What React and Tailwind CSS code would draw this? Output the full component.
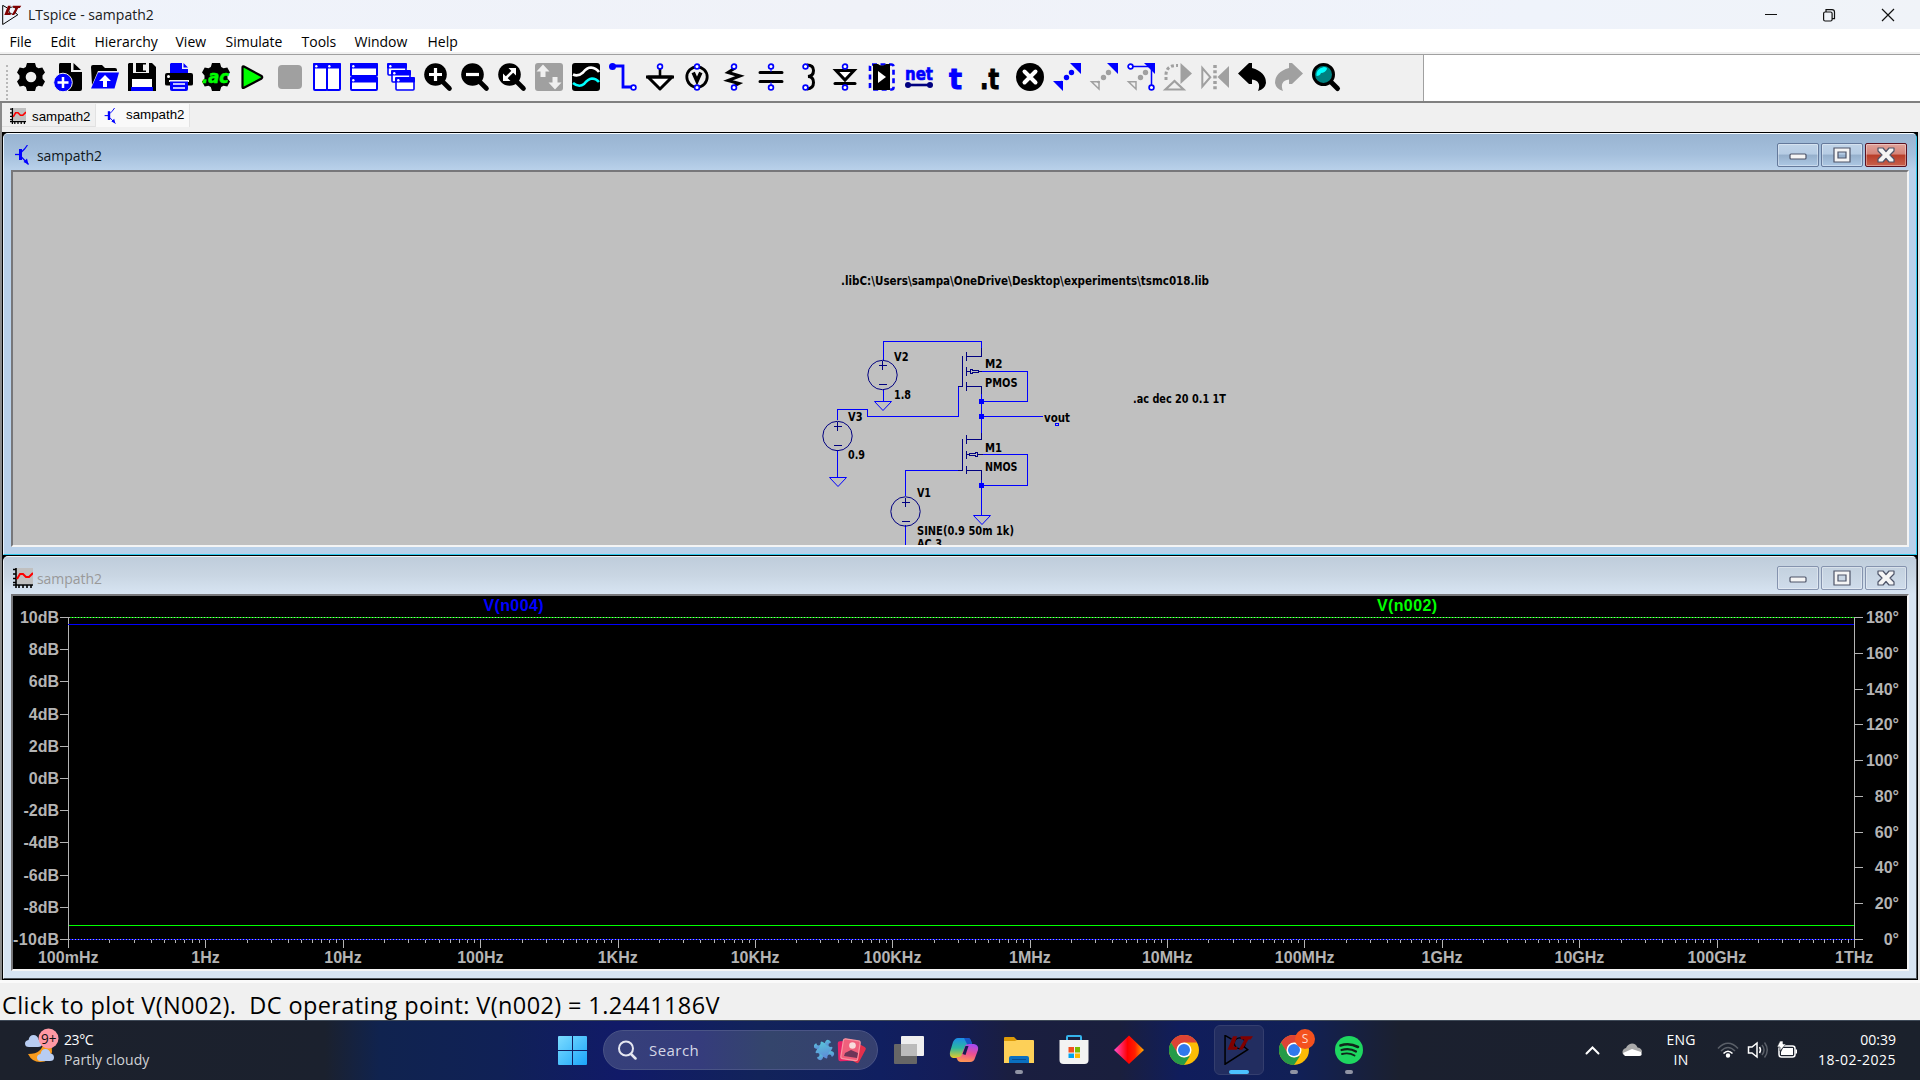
import React from "react";

const BLUE = "#0000ff";
const GRAY = "#a0a0a0";

function Ring({ x, y }) {
  return <circle cx={x} cy={y} r="2.4" fill="#fff" stroke={BLUE} strokeWidth="1.7" />;
}

function Lens({ children }) {
  return (
    <>
      <path d="M17.5 17.5 L25.5 25.5" stroke="#000" strokeWidth="4.6" strokeLinecap="round" />
      <circle cx="11.5" cy="11.5" r="11.3" fill="#000" />
      {children}
    </>
  );
}

const Pane = ({ x, y, w, h, sw = 2 }) => (
  <g>
    <rect x={x + 1} y={y + 1} width={w - 2} height={h - 2} rx="1" fill="#fff" stroke={BLUE} strokeWidth={sw} />
    <rect x={x} y={y} width={w} height="5.5" rx="1" fill={BLUE} />
    <circle cx={x + 3.3} cy={y + 3.2} r="1.2" fill="#fff" />
  </g>
);

const TOOLS = [
  ["settings", <g>
    <path d="M10 0h8l1.2 4 2.3 1.3L25.300 4.500 28 9.500 25.500 12.400v3.200L28 18.500l-2.700 5-3.800-.800L19.200 24 18 28h-8l-1.200-4-2.300-1.300-3.800.8L0 18.500l2.500-2.900v-3.200L0 9.500l2.700-5 3.800.8L8.800 4z" />
    <circle cx="14" cy="14" r="5.300" fill="#f0f0f0" />
  </g>],
  ["new", <g>
    <path d="M6 0h11v9h11v17q0 2-2 2H6q-2 0-1-2V2q0-2 1-2zM19.500 0v7H27z" />
    <circle cx="9" cy="19.500" r="9.300" fill={BLUE} stroke="#f0f0f0" strokeWidth="1" />
    <path d="M9 14v11M3.500 19.500h11" stroke="#fff" strokeWidth="2.500" />
  </g>],
  ["open", <g>
    <path d="M0 4q0-2 2-2h9l3 3h10q2 0 2 2v1H7L1 22z" />
    <path d="M7 9.500h21l-4.500 16H0z" fill={BLUE} />
    <path d="M14 12l6 6h-4v6h-4v-6H8z" fill="#fff" />
  </g>],
  ["save", <g>
    <path d="M1 0h4v10h16V0h3l4 4v24H0V1z" />
    <path d="M8 0h10v9H8z" />
    <path d="M15 1.500h3v6h-3z" fill="#f0f0f0" />
    <path d="M4 16h20v9H4z" fill="#fff" />
    <path d="M3 24h22v4H3z" fill={BLUE} />
  </g>],
  ["print", <g>
    <path d="M6 0h11v6h6v4H5V1z" fill={BLUE} />
    <path d="M18.500 0v4.500H23z" fill={BLUE} />
    <path d="M2 10h24q2 0 2 2v9q0 1.500-2 1.500H2Q0 22.500 0 21v-9q0-2 2-2z" />
    <circle cx="3.500" cy="13.500" r="1.500" fill="#fff" />
    <path d="M4 17h20v2H4z" fill="#f0f0f0" />
    <path d="M5 18.500h18V26q0 2-2 2H7q-2 0-2-2z" fill={BLUE} />
    <path d="M8 21h12M8 25h12" stroke="#fff" strokeWidth="1.500" />
  </g>],
  ["analysis", <g>
    <path d="M10 0h8l1.200 4 2.300 1.300L25.300 4.500 28 9.500 25.500 12.400v3.200L28 18.500l-2.700 5-3.800-.800L19.200 24 18 28h-8l-1.200-4-2.300-1.300-3.800.8L0 18.500l2.500-2.900v-3.200L0 9.500l2.700-5 3.800.8L8.800 4z" />
    <text x="0" y="20" fontFamily="DejaVu Sans" fontWeight="700" fontStyle="italic" fontSize="17" textLength="27" lengthAdjust="spacingAndGlyphs" fill="#00ff00" stroke="#00ff00" strokeWidth=".5">.ac</text>
  </g>],
  ["run", <path d="M3.500 4.500v19.500q0 1.500 1.500.800L22.500 15.500q1.500-1.500 0-2.500L5 3.500Q3.500 3 3.500 4.500z" fill="#00ff00" stroke="#000" strokeWidth="2.200" />],
  ["stop", <rect x="2" y="2" width="24" height="24" rx="4" fill={GRAY} />],
  ["tile-v", <g><Pane x={0} y={0} w={15} h={28} /><Pane x={13} y={0} w={15} h={28} /></g>],
  ["tile-h", <g><Pane x={0} y={0} w={28} h={14} /><Pane x={0} y={14} w={28} h={14} /></g>],
  ["cascade", <g><Pane x={0} y={0} w={20} h={13} sw={1.600} /><Pane x={4} y={7} w={20} h={13} sw={1.600} /><Pane x={8} y={14} w={20} h={14} sw={1.600} /></g>],
  ["zoom-in", <Lens><path d="M11.500 5v13M5 11.500h13" stroke="#fff" strokeWidth="3.200" /></Lens>],
  ["zoom-out", <Lens><path d="M5 11.500h13" stroke="#fff" strokeWidth="3.200" /></Lens>],
  ["zoom-fit", <Lens><path d="M8 15l7-7" stroke="#fff" strokeWidth="2.600" /><path d="M10.500 5H18v7.500zM5 10.500V18h7.500z" fill="#fff" /></Lens>],
  ["pan", <g><rect width="28" height="28" rx="3" fill={GRAY} /><path d="M8 1.500l6.500 7h-4V14h-5V8.500h-4zM20 26.500l-6.500-7h4V14h5v5.500h4z" fill="#f0f0f0" /></g>],
  ["waves", <g>
    <rect width="28" height="28" rx="3" />
    <path d="M1 11.500q5 2.500 10-2 4-5 8-5 5 .5 8 4.500" fill="none" stroke="#fff" strokeWidth="2.600" />
    <path d="M1 20q6 5 11 1 4-5 8-5.500 4 0 7 3.500" fill="none" stroke="#00ffff" strokeWidth="2.600" />
  </g>],
  ["wire", <g><path d="M3 3h11v21h9" fill="none" stroke={BLUE} strokeWidth="2.800" /><circle cx="3.500" cy="3.500" r="3.500" fill={BLUE} /><Ring x={24.500} y={24.500} /></g>],
  ["ground", <g><path d="M14 5v9" stroke="#000" strokeWidth="2.600" /><path d="M2 14h24L14 26z" fill="#fff" stroke="#000" strokeWidth="3" strokeLinejoin="round" /><path d="M0 14h28" stroke="#000" strokeWidth="3" /><Ring x={14} y={3.500} /></g>],
  ["voltage", <g><circle cx="14" cy="14" r="10.200" fill="none" stroke="#000" strokeWidth="2.800" /><path d="M10.200 9.500l3.800 8.500 3.800-8.500" fill="none" stroke="#000" strokeWidth="3.600" /><Ring x={14} y={3.500} /><Ring x={14} y={24.500} /></g>],
  ["resistor", <g><path d="M15 5l-7 4.500 12 3.500-12 4.500 11 3-4 2" fill="none" stroke="#000" strokeWidth="3" /><Ring x={14} y={3.500} /><Ring x={14} y={24.500} /></g>],
  ["capacitor", <g><path d="M3 9.500h22M3 18.500h22" stroke="#000" strokeWidth="3" strokeLinecap="round" /><path d="M14 5v4M14 19v4" stroke={BLUE} /><Ring x={14} y={3.500} /><Ring x={14} y={24.500} /></g>],
  ["inductor", <g><path d="M13 2q6.500 0 6.500 5.500T14 13.500q5.500 0 5.500 6T13 26" fill="none" stroke="#000" strokeWidth="3" /><Ring x={11.500} y={3.500} /><Ring x={11.500} y={24.500} /></g>],
  ["diode", <g><path d="M5 7.500h18l-9 9.500z" fill="#fff" stroke="#000" strokeWidth="3" /><path d="M4 20.500h20" stroke="#000" strokeWidth="3" strokeLinecap="round" /><Ring x={14} y={3.500} /><Ring x={14} y={24.500} /></g>],
  ["component", <g>
    <rect x="2" y="1.500" width="23.500" height="25" rx="2" fill="none" stroke={BLUE} strokeWidth="2.600" strokeDasharray="5 3.500" />
    <path d="M5 2q0-1 1-1h4q4 3 8 0h4v26H5z" /><path d="M10 8v12l8-6z" fill="#fff" />
  </g>],
  ["net", <g><text x="0" y="16.500" fontFamily="DejaVu Sans" fontWeight="700" fontSize="18" textLength="28" lengthAdjust="spacingAndGlyphs" fill={BLUE} stroke={BLUE} strokeWidth=".7">net</text><path d="M3 22h22" stroke="#000080" strokeWidth="2.600" /><circle cx="3" cy="22" r="3" fill="#000080" /><circle cx="25" cy="22" r="3" fill="#000080" /></g>],
  ["text", <text x="7" y="25.500" fontFamily="DejaVu Sans" fontWeight="700" fontSize="29" textLength="13" lengthAdjust="spacingAndGlyphs" fill={BLUE} stroke={BLUE}>t</text>],
  ["directive", <text x="1" y="25.500" fontFamily="DejaVu Sans" fontWeight="700" fontSize="29" textLength="19" lengthAdjust="spacingAndGlyphs" stroke="#000">.t</text>],
  ["delete", <g><circle cx="14" cy="14" r="14" /><path d="M8.500 8.500l11 11M19.500 8.500l-11 11" stroke="#fff" strokeWidth="4" strokeLinecap="round" /></g>],
  ["move", <g fill={BLUE}><path d="M17 0h11v11zM0 18h10v10z" /><circle cx="18.500" cy="9.500" r="2.700" /><circle cx="13.500" cy="14.500" r="2.700" /><circle cx="8.500" cy="19" r="1.300" /></g>],
  ["drag", <g><path d="M17 0h11v11z" fill={BLUE} /><path d="M1.500 18.800h7.500v7.200z" fill="none" stroke={GRAY} strokeWidth="1.500" /><g fill={GRAY}><circle cx="18.500" cy="9.500" r="2.700" /><circle cx="13.500" cy="14.500" r="2.700" /><circle cx="8.500" cy="19" r="1.300" /></g></g>],
  ["drag-wire", <g><path d="M17 0h11v11z" fill={BLUE} /><path d="M5 3.500h19.500V22" fill="none" stroke={BLUE} strokeWidth="1.500" /><path d="M1.500 18.800h7.500v7.200z" fill="none" stroke={GRAY} strokeWidth="1.500" /><g fill={GRAY}><circle cx="18.500" cy="9.500" r="2.700" /><circle cx="13.500" cy="14.500" r="2.700" /></g><Ring x={3.500} y={3.500} /><Ring x={24.500} y={24.500} /></g>],
  ["rotate", <g><path d="M16.500 0L28 10.500 16.500 21z" fill={GRAY} /><path d="M1.500 26.500h18L10.500 18z" fill="none" stroke={GRAY} strokeWidth="2.200" /><path d="M2 17V12Q2 2 14 2.500" fill="none" stroke={GRAY} strokeWidth="3" strokeDasharray="3 2.200" /></g>],
  ["mirror", <g><path d="M1.300 5v18.500l8-9.300z" fill="none" stroke={GRAY} strokeWidth="2" /><path d="M28 3v22l-11.500-11z" fill={GRAY} /><path d="M14 2v25" stroke={GRAY} strokeWidth="3.500" strokeDasharray="3 2.300" /></g>],
  ["undo", <path d="M0 10.500L11 0h3v5q14 4 14 15-1 6-8 8 4-10-6-11.500V21h-3z" />],
  ["redo", <path d="M28 10.500L17 0h-3v5Q0 9 0 20q1 6 8 8-4-10 6-11.500V21h3z" fill={GRAY} />],
  ["find", <g><path d="M18 18l7.500 7.500" stroke="#000" strokeWidth="5" strokeLinecap="round" /><circle cx="11.500" cy="11.500" r="10" fill="#008080" stroke="#000" strokeWidth="3" /><path d="M4.500 13q-1-7 7.500-9 3 0 3 2-2 4-6 4-1 3-4.500 3z" fill="#00ffff" /></g>],
];

const MENUS = [
  ["File", "w-[41px]"], ["Edit", "w-[44px]"], ["Hierarchy", "w-[81px]"], ["View", "w-[50px]"],
  ["Simulate", "w-[76px]"], ["Tools", "w-[53px]"], ["Window", "w-[73px]"], ["Help", "w-[60px]"],
];

function LtLogo({ size }) {
  return (
    <svg width={size} height={size} viewBox="0 0 20 20" fill="none" className="shrink-0">
      <path d="M5 2.800L.7.300v19.200L15.800 9.800 13 7.500" stroke="#000" strokeWidth="1" />
      <circle cx="10.500" cy="5.500" r="3.600" stroke="#000" strokeWidth=".8" />
      <path d="M6 .8h2.800L6.300 7.800h2.900L8.500 9.900H2.300z" fill="#800000" />
      <path d="M10.800.8h8.500l-1.500 2.200h-1.500L12.200 9.900H9.800L13.700 3h-2.200z" fill="#800000" />
    </svg>
  );
}

function PlotIcon({ size }) {
  return (
    <svg width={size} height={size} viewBox="0 0 20 20" className="shrink-0">
      <path d="M3 0h17v16H3z" fill="#c0c0c0" />
      <path d="M3 0v20M0 17h20M6 17v3M10 17v3M14 17v3M18 17v3M0 1.500h3M0 6h3M0 10.500h3M0 14.500h3" stroke="#000" strokeWidth="1.600" />
      <path d="M4 11l3-5h3l3 3h3l4-4" stroke="#f00" strokeWidth="2" fill="none" />
    </svg>
  );
}

function BjtIcon({ size }) {
  return (
    <svg width={size} height={size} viewBox="0 0 20 20" fill="none" className="shrink-0">
      <path d="M2 9.500h5" stroke={BLUE} strokeWidth="1.300" />
      <path d="M7.500 4v11" stroke={BLUE} strokeWidth="3" />
      <path d="M8.500 7l3-3 3-4M8.500 12l7 7.500" stroke={BLUE} strokeWidth="1.200" />
      <path d="M15.500 19.500l-5-2.500 3.500-3.500z" fill={BLUE} />
    </svg>
  );
}

function CaptionButton({ kind, active }) {
  const red = active && kind === "close";
  const skin = red
    ? "border-[#5b1020] bg-[linear-gradient(180deg,#e0a39b_0%,#d58479_46%,#b83c28_50%,#c9614c_100%)]"
    : active
      ? "border-[#64799b] bg-[linear-gradient(180deg,#c0d4e8_0%,#b6cce4_46%,#95afcb_50%,#adc8e4_100%)]"
      : "border-[#8593ae] bg-[linear-gradient(180deg,#c3d1df_0%,#c9d6e4_50%,#cfdceb_100%)]";
  return (
    <div className={`flex h-6 w-[42px] items-center justify-center rounded-[2px] border shadow-[inset_0_0_0_1px_rgba(255,255,255,0.35)] ${skin}`}>
      <svg width="20" height="18" viewBox="0 0 20 18" fill="#f5f5f5" stroke="#4e5468" strokeWidth="1.200">
        {kind === "min" && <rect x="2" y="8" width="16" height="5" rx="1" />}
        {kind === "max" && <path fillRule="evenodd" d="M2 2h16v14H2zM6 6v6h8V6z" />}
        {kind === "close" && <path d="M2 2h5l3 3.500L13 2h5v3l-4 4 4 4v3h-5l-3-3.500L7 16H2v-3l4-4-4-4z" strokeLinejoin="round" />}
      </svg>
    </div>
  );
}

function MdiWindow({ active, icon, children }) {
  const frame = active
    ? "bg-[#b9d1ea] border-t-[#f4fbff] border-l-[#e6f1fb] border-r-[#2cc8ec] border-b-[#2cc8ec]"
    : "bg-[#d7e4f2] border-t-[#eef3f7] border-l-[#eef4fa] border-r-[#50565c] border-b-[#50565c]";
  const bar = active
    ? "bg-[linear-gradient(180deg,#99b4d1_0%,#a4bfdc_55%,#b9d1ea_100%)]"
    : "bg-[linear-gradient(180deg,#bfcddb_0%,#c9d6e3_50%,#d7e4f2_100%)]";
  return (
    <section className={`flex flex-col rounded-t-[5px] border ${active ? "h-[422px]" : "h-[423px]"} ${frame}`}>
      <header className={`flex shrink-0 items-center rounded-t-[4px] pr-[9px] pl-[9px] ${active ? "h-[36px]" : "h-[37px]"} ${bar}`}>
        {icon}
        <span className={`ml-[4px] pt-[6px] text-[14px] tracking-[-0.05px] ${active ? "text-[#101820]" : "text-[#999]"}`}>sampath2</span>
        <div className="ml-auto flex gap-[2px] pt-[5px]">
          <CaptionButton kind="min" active={active} />
          <CaptionButton kind="max" active={active} />
          <CaptionButton kind="close" active={active} />
        </div>
      </header>
      <div className="mr-[7px] ml-[7px] h-[377px] shrink-0 overflow-hidden border-t-2 border-r-2 border-b-2 border-l-2 border-t-[#77777a] border-r-[#f4f4f4] border-b-[#f4f4f4] border-l-[#77777a]">
        {children}
      </div>
    </section>
  );
}

function Source({ x, y }) {
  return (
    <g stroke="#000080" fill="none">
      <circle cx={x} cy={y} r="14.700" />
      <path d={`M${x - 4} ${y - 9.500}h8M${x} ${y - 14}v9M${x - 4} ${y + 9.500}h8`} shapeRendering="crispEdges" />
    </g>
  );
}

const NOTES = [
  [841, 285, 368, ".libC:\\Users\\sampa\\OneDrive\\Desktop\\experiments\\tsmc018.lib"],
  [894, 361, 14.500, "V2"], [894, 399, 17, "1.8"], [848, 421, 14.500, "V3"], [848, 459, 17, "0.9"],
  [985, 368, 17.500, "M2"], [985, 387, 32.500, "PMOS"], [985, 452, 17, "M1"], [985, 471, 32.500, "NMOS"],
  [917, 497, 14, "V1"], [917, 535, 97, "SINE(0.9 50m 1k)"], [917, 547.500, 25, "AC 3"],
  [1044, 422, 26, "vout"], [1133, 403, 93, ".ac dec 20 0.1 1T"],
];

function Schematic() {
  return (
    <svg width="1896" height="373" viewBox="13 172 1896 373" className="block bg-[#c0c0c0]">
      <g fill="none" stroke={BLUE} shapeRendering="crispEdges">
        <path d="M883.500 360V341.500H981.500V350M958.500 386.500V416.500H867.500V409.500H837.500V420M981.500 371.500H1027.500V401.500H981.500M981.500 392V433M981.500 416.500H1043M837.500 450V477.500M883.500 389V401.500M905.500 496V470.500H959M981.500 454.500H1027.500V485.500H981.500M981.500 480V515.500M905.500 525V547" />
        <path d="M874.500 401.500h17l-8.500 9zM829.500 477.500h17l-8.500 9zM973.500 515.500h17l-8.500 9z" shapeRendering="auto" />
        <path d="M1055.500 423.500h3v2h-3z" />
      </g>
      <g fill="none" stroke="#000080" shapeRendering="crispEdges">
        <path d="M962.500 356V386.500H958M966.500 352v9M966.500 367v9M966.500 382v9M981.500 348V356.500H966.500M966.500 371.500H970M970.500 369.500h2M970.500 369v4.500h2M972 370.500h7M972 372.500h7M978 371.500h4M966.500 386.500H981.500V394" />
        <path d="M962.500 439V470.500H958M966.500 435v9M966.500 451v8M966.500 466v8M981.500 433V439.500H966.500M966.500 454.500h3M969 453.500h7M969 455.500h7M975 452.500h2.500v4H975M977 454.500h6M966.500 470.500H981.500V480" />
      </g>
      <Source x={882.500} y={375} />
      <Source x={837.500} y={436} />
      <Source x={905.500} y={511.500} />
      <g fill={BLUE}>
        {[401, 416, 485].map((y) => <rect key={y} x="979" y={y - 2} width="5" height="5" />)}
      </g>
      <g fontFamily="'DejaVu Sans', sans-serif" fontWeight="700" fontSize="11.500">
        {NOTES.map(([x, y, w, t]) => (
          <text key={t} x={x} y={y} textLength={w} lengthAdjust="spacingAndGlyphs">{t}</text>
        ))}
      </g>
    </svg>
  );
}

const DB = ["10dB", "8dB", "6dB", "4dB", "2dB", "0dB", "-2dB", "-4dB", "-6dB", "-8dB", "-10dB"];
const DEG = [180, 160, 140, 120, 100, 80, 60, 40, 20, 0];
const HZ = ["100mHz", "1Hz", "10Hz", "100Hz", "1KHz", "10KHz", "100KHz", "1MHz", "10MHz", "100MHz", "1GHz", "10GHz", "100GHz", "1THz"];

function BodePlot() {
  const decade = (1854 - 68) / 13;
  const ticks = [];
  HZ.forEach((_, i) => {
    const x = 68 + i * decade;
    ticks.push(`M${Math.round(x) + 0.5} 939V948`);
    if (i < 13) for (let k = 2; k < 10; k++) ticks.push(`M${Math.round(x + decade * Math.log10(k)) + 0.5} 939V943`);
  });
  return (
    <svg width="1896" height="373" viewBox="13 596 1896 373" className="block bg-black">
      <g fill="none" strokeWidth="1" shapeRendering="crispEdges" stroke="#b4b4b4">
        <path d="M68.500 617V940M1854.500 617V940" />
        <path d={ticks.join("")} />
        {DB.map((t, i) => <path key={t} d={`M60 ${Math.round(617 + i * 32.200) + 0.5}h8`} />)}
        {DEG.map((t, i) => <path key={t} d={`M1855 ${Math.round(617 + i * 35.780) + 0.5}h8`} />)}
        <path d="M69 617.500H1854" stroke="#00e000" />
        <path d="M69 617.500H1854" strokeDasharray="1 2" />
        <path d="M68 624.500H1854" stroke={BLUE} />
        <path d="M69 925.500H1854" stroke="#00ff00" />
        <path d="M69 939.500H1854" stroke={BLUE} />
        <path d="M69 939.500H1854" strokeDasharray="1 2" />
      </g>
      <g fontFamily="'Liberation Sans', Arial, sans-serif" fontWeight="700" fontSize="16" fill="#b4b4b4">
        {DB.map((t, i) => <text key={t} x="59" y={623 + i * 32.200} textAnchor="end" textLength={t === "-10dB" ? 46 : undefined}>{t}</text>)}
        {DEG.map((t, i) => <text key={t} x="1899" y={623 + i * 35.780} textAnchor="end">{t}°</text>)}
        {HZ.map((t, i) => <text key={t} x={68.200 + i * decade} y="963" textAnchor="middle">{t}</text>)}
        <text x="483.500" y="611" textLength="60" fill={BLUE}>V(n004)</text>
        <text x="1377" y="611" textLength="60" fill="#00ff00">V(n002)</text>
      </g>
    </svg>
  );
}

function Chrome() {
  return (
    <svg width="30" height="30" viewBox="0 0 30 30">
      <circle cx="15" cy="15" r="15" fill="#fbbc05" />
      <path d="M2 7.500A15 15 0 0 1 28 7.500H15L8.500 19z" fill="#dd4335" />
      <path d="M2 7.500l7 11.200L15 22.500l6-1.500L15 30A15 15 0 0 1 2 7.500z" fill="#259b48" />
      <circle cx="15" cy="15" r="7.500" fill="#fff" />
      <circle cx="15" cy="15" r="6" fill="#3079ec" />
    </svg>
  );
}

const APPS = [
  ["taskview", <svg width="30" height="28" viewBox="0 0 30 28"><rect y="8" width="23" height="20" rx="1" fill="#666" /><rect x="7" y="0" width="23" height="20" rx="1" fill="#efefef" /><path d="M7 8h16v12H7z" fill="#bbb" /></svg>],
  ["copilot", <svg width="30" height="28" viewBox="0 0 30 28">
    <defs>
      <linearGradient id="cpA" x1="0" y1="0" x2="0" y2="1"><stop offset="0" stopColor="#1c8ce8" /><stop offset=".5" stopColor="#2cb8a0" /><stop offset="1" stopColor="#e8cc28" /></linearGradient>
      <linearGradient id="cpB" x1="0.500" y1="0" x2="0.300" y2="1"><stop offset="0" stopColor="#a54af0" /><stop offset=".5" stopColor="#ee5090" /><stop offset="1" stopColor="#ff9a50" /></linearGradient>
    </defs>
    <path d="M9 2h10q2 0 3 3l1 3q-5-1-6 3l-3 8q-1 3-4 3H4q-4-1-3-6L4 6q2-4 5-4z" fill="url(#cpA)" />
    <path d="M15 2h5q2 1 3 6h-5z" fill="#1656c8" />
    <path d="M21 26H12q-3 0-4-3l-1-2q5 1 6-3l3-8q1-2 4-2h5q5 1 4 6l-3 8q-1 4-5 4z" fill="url(#cpB)" />
    <path d="M13.500 18l3-8h3l-3 9z" fill="#171b50" />
  </svg>],
  ["explorer", <svg width="30" height="28" viewBox="0 0 30 28"><path d="M0 2q0-1 1-1h9l3 3h4v6H0z" fill="#dc9a08" /><path d="M0 5h11l2-1h16q1 0 1 1v22H0z" fill="#fdd058" /><path d="M5 27v-5q0-2 2-2h16q2 0 2 2v5z" fill="#0a6fc0" /><path d="M8 23.500h14" stroke="#064c90" /></svg>],
  ["store", <svg width="30" height="30" viewBox="0 0 30 30"><path d="M8 6V2q0-1 1-1h12q1 0 1 1v4" fill="none" stroke="#35b3ec" strokeWidth="2" /><path d="M.5 5h29v20q0 4-4 4h-21q-4 0-4-4z" fill="#f3f3f3" /><path d="M9.500 12H15v5.500H9.500z" fill="#f25022" /><path d="M16 12h5v5.500h-5z" fill="#7fba00" /><path d="M9.500 18.500H15V23H9.500z" fill="#00a4ef" /><path d="M16 18.500h5V23h-5z" fill="#ffb900" /></svg>],
  ["diamond", <svg width="30" height="30" viewBox="0 0 30 30"><defs><linearGradient id="dm"><stop offset="0" stopColor="#ff4fd0" /><stop offset=".45" stopColor="#f00" /><stop offset=".7" stopColor="#ff2000" /><stop offset="1" stopColor="#ffb000" /></linearGradient></defs><path d="M15 .5L30 15 15 29 0 15z" fill="url(#dm)" /></svg>],
  ["chrome", <Chrome />],
  ["ltspice", <LtLogo size={30} />],
  ["chrome-s", <div className="relative"><Chrome /><div className="absolute -top-[6px] left-[16px] flex size-5 items-center justify-center rounded-full bg-[#f4511e] text-[12px] text-[#ffd9cc]">S</div></div>],
  ["spotify", <svg width="28" height="28" viewBox="0 0 28 28" fill="none" stroke="#10251a" strokeLinecap="round"><circle cx="14" cy="14" r="14" fill="#1ed760" stroke="none" /><path d="M5.500 9.500q9-3 17.500 1.500" strokeWidth="2.600" /><path d="M6.500 14q8-2.500 14.500 1.500" strokeWidth="2.200" /><path d="M7 18q7-1.800 12.500 1.500" strokeWidth="1.900" /></svg>],
];

const Cloud = ({ x, y, s = 1 }) => (
  <path transform={`translate(${x} ${y}) scale(${s})`} d="M4 12Q0 12 0 8.500 0 5.500 3.500 5 4.500 0 8.500 0q4 0 5 4.500Q17 5 17 8.500 17 12 13 12z" fill="#b8cdf2" />
);

function Taskbar() {
  return (
    <footer className="flex h-[60px] items-center border-t border-[#3f4a58] bg-[linear-gradient(90deg,#1c212c_0px,#1b212e_325px,#10234f_380px,#102156_500px,#111a68_620px,#12235a_760px,#101f60_880px,#141d58_950px,#1a1e40_1010px,#1a1f3d_1120px,#101d5c_1180px,#112056_1300px,#1b202f_1400px,#1b212c_1920px)] pb-px text-white">
      <div className="flex w-[558px] items-center">
        <svg width="38" height="44" viewBox="24 1027 38 44" className="ml-6 shrink-0">
          <path d="M28 1053q8 0 11-3 5-4 5-12 9 5 8 13-2 10-12 10-8 0-12-8z" fill="#f79a1c" />
          <Cloud x={25} y={1034} />
          <Cloud x={37} y={1048} />
          <circle cx="48.500" cy="1037.500" r="10" fill="#ff99a4" />
          <text x="41" y="1043" fontSize="14" fontFamily="'Open Sans'" textLength="15.500" lengthAdjust="spacingAndGlyphs" fill="#111">9+</text>
        </svg>
        <div className="ml-[2px] flex flex-col text-[14px] leading-5">
          <span className="tracking-[-0.4px]">23°C</span>
          <span className="tracking-[0.12px] text-[#d0d2d6]">Partly cloudy</span>
        </div>
      </div>
      <svg width="29" height="29" viewBox="0 0 29 29" className="shrink-0">
        <defs><linearGradient id="win" x2="1" y2="1" gradientUnits="objectBoundingBox"><stop offset="0" stopColor="#7cdcff" /><stop offset="1" stopColor="#1ba5fa" /></linearGradient></defs>
        <path d="M0 1q0-1 1-1h13v14H0zM15 0h13q1 0 1 1v13H15zM0 15h14v14H1q-1 0-1-1zM15 15h14v13q0 1-1 1H15z" fill="url(#win)" />
      </svg>
      <div className="ml-4 flex h-10 w-[275px] shrink-0 items-center rounded-full border border-[#4a5486] bg-[linear-gradient(90deg,#36407a_0%,#353c7c_35%,#34456c_60%,#36406f_100%)] pl-[14px]">
        <svg width="19" height="20" viewBox="0 0 19 20" fill="none" stroke="#e4e6f0" strokeLinecap="round"><circle cx="8" cy="8.500" r="7" strokeWidth="2" /><path d="M13 14l4.500 4.500" strokeWidth="2.500" /></svg>
        <span className="ml-[12px] text-[15px] tracking-[0.45px] text-[#d5d8e6]">Search</span>
        <svg width="54" height="28" viewBox="0 0 54 28" className="mr-[9px] ml-auto">
          <defs><linearGradient id="pz" x2="1" y2="1"><stop offset="0" stopColor="#57c6da" /><stop offset="1" stopColor="#5f86d8" /></linearGradient></defs>
          <g transform="rotate(28 10 14)" fill="url(#pz)">
            <rect x="3.500" y="7.500" width="13" height="13" rx="1" />
            <circle cx="10" cy="5.800" r="2.800" /><circle cx="18.200" cy="14" r="2.800" />
            <circle cx="10" cy="22.200" r="2.800" /><circle cx="1.800" cy="14" r="2.800" />
          </g>
          <g fill="#35436e"><circle cx="4.500" cy="7.500" r="2" /><circle cx="16.500" cy="9" r="2" /><circle cx="15.500" cy="20.500" r="2" /><circle cx="3.500" cy="19" r="2" /></g>
          <rect x="24" y="5" width="17" height="20" rx="2" fill="#e82368" transform="rotate(-2 33 14)" />
          <rect x="34" y="8" width="15" height="18" rx="2" fill="#e2304c" transform="rotate(28 43 17)" />
          <rect x="28" y="4" width="17" height="20" rx="2" fill="#f0607c" stroke="#f995a2" strokeWidth="1.200" transform="rotate(9 38 14)" />
          <path d="M31 17l6-3 7 3-1 5-13-2z" fill="#6c3558" /><circle cx="38.500" cy="9.500" r="3.300" fill="#f8dcdc" />
        </svg>
      </div>
      <div className="ml-[6px] flex items-center gap-[5px]">
        {APPS.map(([name, icon]) => (
          <div key={name} className={`relative flex h-[50px] w-[50px] items-center justify-center rounded-md ${name === "ltspice" ? "border border-[#343e6e] bg-[#222d60]" : ""}`}>
            {icon}
            {name === "ltspice" && <span className="absolute bottom-0 h-1 w-5 rounded-full bg-[#4cc2ff]" />}
            {["explorer", "chrome-s", "spotify"].includes(name) && <span className="absolute bottom-px h-1 w-2 rounded-full bg-[#9094a4]" />}
          </div>
        ))}
      </div>
      <div className="ml-auto flex items-center pr-6">
        <svg width="15" height="9" viewBox="0 0 15 9" fill="none" stroke="#fff" strokeWidth="2" strokeLinecap="round"><path d="M1.500 7.500l6-6 6 6" /></svg>
        <svg width="21" height="14" viewBox="0 0 21 14" className="ml-[22px]"><path d="M4 13Q0 12 .5 8.500 1 5.500 4 5 5.500 1 10 .5q4 0 5.500 4Q20 5 20 9l-3 4z" fill="#aaa" /><path d="M3 13l-2-3 9-4 9 3q2 4-2 4z" fill="#fff" /></svg>
        <div className="ml-[23px] flex w-[30px] flex-col items-center text-[14px] leading-5 tracking-[0.2px]"><span>ENG</span><span>IN</span></div>
        <svg width="22" height="16" viewBox="0 0 22 16" fill="none" className="ml-[21px]" stroke="#fff" strokeWidth="1.600"><path d="M1 6.500Q11-4 21 6.500M4 9q7-7 14 0" stroke="#5a5f68" /><path d="M6.500 11.500q4.500-4.500 9 0" /><circle cx="11" cy="13.500" r="1.400" fill="#fff" /></svg>
        <svg width="22" height="18" viewBox="0 0 22 18" fill="none" className="ml-[8px]" stroke="#fff" strokeWidth="1.500"><path d="M1.500 6v6H5l5 4V2L5 6zM12.500 6q2 3 0 6" /><path d="M15 4q4 5 0 10M17.500 1.500q5.500 7.500 0 15" stroke="#5a5f68" /></svg>
        <svg width="21" height="18" viewBox="0 0 21 18" className="ml-[8px]"><rect x="2" y="5" width="16" height="11" rx="2.500" fill="none" stroke="#fff" strokeWidth="1.500" /><path d="M6 7h10v7H4v-3zM18.500 8.500H20v4h-1.500z" fill="#fff" /><path d="M3 0h3v3h3l-6 7V6H0z" fill="#fff" stroke="#1b212c" strokeWidth=".6" /></svg>
        <div className="ml-[19px] flex w-[79px] flex-col items-end text-[14px] leading-5"><span>00:39</span><span className="tracking-[0.5px]">18-02-2025</span></div>
      </div>
    </footer>
  );
}

export default function App() {
  return (
    <div className="flex h-[1080px] w-[1920px] flex-col overflow-hidden bg-[#f0f0f0] font-['Open_Sans','Noto_Sans',sans-serif] whitespace-nowrap text-black">
      <div className="flex h-[29px] shrink-0 items-center bg-[linear-gradient(90deg,#eff3fb_0%,#f0f2f8_45%,#eff3fb_80%,#f0f3f8_100%)] pl-[2px]">
        <LtLogo size={20} />
        <span className="ml-[6px] text-[14px] tracking-[0.02px] text-[#202020]">LTspice - sampath2</span>
        <svg width="130" height="14" viewBox="0 0 130 14" fill="none" stroke="#111" strokeWidth="1.200" className="mr-[25px] ml-auto">
          <path d="M0 6.500h12M117 1l12 12M129 1l-12 12" />
          <rect x="58.600" y="4" width="8.500" height="9" rx="1.500" /><path d="M61 4V1.600h6q2.500 0 2.500 2.500v6.500H67" />
        </svg>
      </div>
      <nav className="flex h-[26px] shrink-0 border-b border-[#a0a0a0] bg-white pl-[9.500px] text-[14px] leading-[25px] shadow-[inset_0_-2px_0_#f0f0f0]">
        {MENUS.map(([m, w]) => <span key={m} className={w}>{m}</span>)}
      </nav>
      <div className="flex h-12 shrink-0 border-b-2 border-[#808080] bg-white">
        <div className="flex w-[1424px] items-start gap-[9px] border-r border-[#a0a0a0] bg-[#f0f0f0] pt-2">
          <div className="h-[35px] w-[8px] shrink-0 self-center border-r-2 border-dotted border-[#b8b8b8]" />
          {TOOLS.map(([name, icon]) => (
            <svg key={name} width="28" height="28" viewBox="0 0 28 28" className="shrink-0 overflow-visible">{icon}</svg>
          ))}
        </div>
      </div>
      <div className="flex h-[29px] shrink-0 items-start border-l-2 border-[#8a8a8a] font-['Liberation_Sans',Arial,sans-serif] text-[13.333px]">
        <div className="mt-[3px] flex h-[21px] w-[93px] items-center border-b border-[#e0e0e0] pl-2"><PlotIcon size={16} /><span className="ml-[6px] pt-px">sampath2</span></div>
        <div className="mt-px flex h-[23px] w-[95px] items-center border-r border-l border-[#e2e2e2] bg-[#f9f9f9] pl-[7px]"><BjtIcon size={16} /><span className="ml-[7px] pb-[2px]">sampath2</span></div>
      </div>
      <main className="h-[848px] shrink-0 border-r-2 border-l-2 border-r-[#e3e3e3] border-l-[#8a8a8a]">
        <div className="flex h-full flex-col gap-px border-t border-r border-b border-l border-black bg-black">
          <MdiWindow active icon={<div className="pt-[5px]"><BjtIcon size={20} /></div>}><Schematic /></MdiWindow>
          <MdiWindow icon={<div className="pt-[5px]"><PlotIcon size={20} /></div>}><BodePlot /></MdiWindow>
        </div>
      </main>
      <div className="flex h-[40px] shrink-0 items-center border-t-[3px] border-[#fafafa] pt-[6px] pl-[2px] text-[23.500px] leading-[30px] tracking-[0.38px]">
        <span className="whitespace-pre">Click to plot V(N002).  DC operating point: V(n002) = 1.2441186V</span>
      </div>
      <Taskbar />
    </div>
  );
}
